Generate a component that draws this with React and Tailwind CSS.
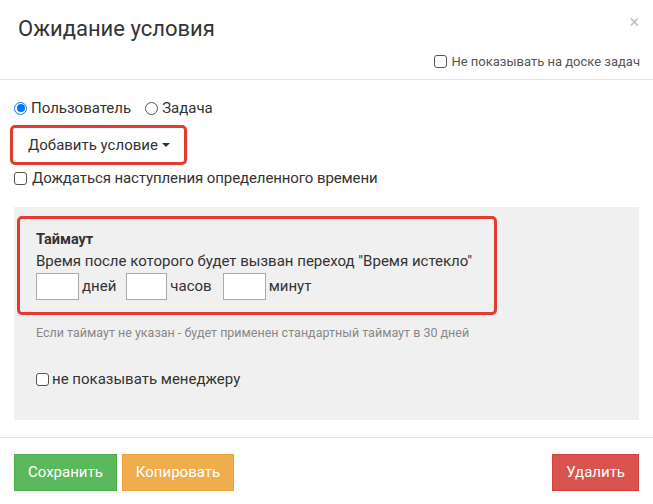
import React from 'react';

function Box() {
  return (
    <span className="inline-block w-[13px] h-[13px] rounded-[3px] border border-[#555] bg-white shrink-0" />
  );
}

function Radio({ checked }) {
  return checked ? (
    <span className="inline-flex items-center justify-center w-[13px] h-[13px] rounded-full border border-[#0075ff] bg-white shrink-0">
      <span className="w-[8px] h-[8px] rounded-full bg-[#0075ff]" />
    </span>
  ) : (
    <span className="inline-block w-[13px] h-[13px] rounded-full border border-[#555] bg-white shrink-0" />
  );
}

export default function App() {
  return (
    <div className="w-[653px] h-[504px] bg-white text-[#333] font-['Roboto',sans-serif] relative overflow-hidden">
      {/* header */}
      <div className="h-[80px] border-b border-[#e5e5e5] px-[18px] pt-[14px] relative">
        <h4 className="text-[22px] leading-[30px] font-normal text-[#333]">Ожидание условия</h4>
        <span className="absolute right-[14px] top-[8px] text-[#c4c4c4] text-[18px]">×</span>
        <label className="absolute right-[13px] top-[52px] flex items-center gap-[4px] text-[13px] text-[#555]">
          <Box />
          <span>Не показывать на доске задач</span>
        </label>
      </div>

      {/* body */}
      <div className="px-[14px] pt-[18px]">
        <div className="flex items-center gap-[4px] text-[15px] h-[20px]">
          <Radio checked />
          <span className="mr-[10px]">Пользователь</span>
          <Radio />
          <span>Задача</span>
        </div>
        <div className="mt-[7px] -ml-[4px] w-[177px] h-[40px] rounded-[5px] border-[3px] border-[#e23b30] flex items-center pl-[15px] text-[15px]">
          Добавить условие
          <span className="ml-[4px] w-0 h-0 border-l-[4px] border-r-[4px] border-t-[4px] border-l-transparent border-r-transparent border-t-[#333]" />
        </div>
        <label className="mt-[3px] flex items-center gap-[5px] text-[15px] h-[20px]">
          <Box />
          <span className="tracking-[-0.1px]">Дождаться наступления определенного времени</span>
        </label>

        <div className="mt-[19px] bg-[#f0f0f0] h-[213px] pt-[9px] px-[3px]">
          <div className="w-[480px] h-[99px] rounded-[5px] border-[3px] border-[#e23b30] px-[16px] pt-[11px]">
            <div className="text-[14.5px] font-bold leading-[20px]">Таймаут</div>
            <div className="text-[15px] leading-[22px]">Время после которого будет вызван переход "Время истекло"</div>
            <div className="flex items-center text-[15px] mt-[1px]">
              <span className="w-[43px] h-[27px] border border-[#aaa] bg-white" />
              <span className="ml-[3px] mr-[10px]">дней</span>
              <span className="w-[41px] h-[27px] border border-[#aaa] bg-white" />
              <span className="ml-[3px] mr-[11px]">часов</span>
              <span className="w-[43px] h-[27px] border border-[#aaa] bg-white" />
              <span className="ml-[3px]">минут</span>
            </div>
          </div>
          <div className="mt-[8px] pl-[19px] text-[12.5px] text-[#888] leading-[20px]">
            Если таймаут не указан - будет применен стандартный таймаут в 30 дней
          </div>
          <label className="mt-[25px] pl-[19px] flex items-center gap-[3px] text-[15px]">
            <Box />
            <span>не показывать менеджеру</span>
          </label>
        </div>
      </div>

      {/* footer */}
      <div className="mt-[17px] border-t border-[#e5e5e5] px-[14px] pt-[16px] flex">
        <button className="h-[37px] px-[13px] bg-[#5cb85c] border border-[#4cae4c] text-white text-[15px]">Сохранить</button>
        <button className="ml-[5px] h-[37px] px-[13px] bg-[#f0ad4e] border border-[#eea236] text-white text-[15px]">Копировать</button>
        <button className="ml-auto h-[37px] px-[13px] bg-[#d9534f] border border-[#d43f3a] text-white text-[15px]">Удалить</button>
      </div>
    </div>
  );
}
